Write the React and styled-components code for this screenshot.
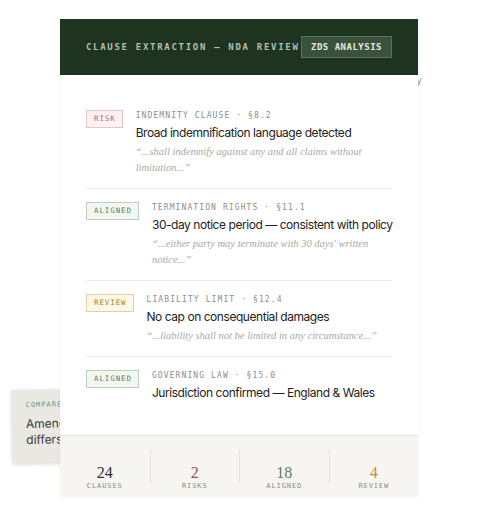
import React from "react";
import styled, { createGlobalStyle } from "styled-components";

const GlobalStyle = createGlobalStyle`
  html, body { margin: 0; padding: 0; background: #ffffff; }
  body { font-family: Inter, "Noto Sans", sans-serif; -webkit-font-smoothing: antialiased; }
  * { box-sizing: border-box; }
`;

const MONO = `"DejaVu Sans Mono", "Liberation Mono", monospace`;
const SERIF = `"Liberation Serif", "DejaVu Serif", serif`;

const Stage = styled.div`
  position: relative;
  width: 490px;
  height: 509px;
  padding: 19px 0 0 60px;
  overflow: hidden;
`;

const BackCard = styled.div`
  position: absolute;
  left: 12px;
  top: 389px;
  width: 150px;
  height: 73px;
  padding: 10px 14px;
  background: #e9e8e3;
  box-shadow: 0 1px 4px rgba(0, 0, 0, 0.16);
  transform: rotate(-1deg);
  z-index: 0;
`;

const BackLabel = styled.div`
  font: 400 7px/10px ${MONO};
  letter-spacing: 1px;
  color: #6f9a6f;
  margin-bottom: 6px;
`;

const BackText = styled.div`
  font: 400 12px/16px Inter, sans-serif;
  color: #3a3a3a;
`;

const BackNote = styled.span`
  position: absolute;
  right: 68px;
  top: 74px;
  font: 400 10px/12px Inter, sans-serif;
  color: #9c9c9c;
  z-index: 0;
`;

const Card = styled.div`
  position: relative;
  z-index: 1;
  width: 358px;
  background: #ffffff;
  box-shadow: 0 1px 3px rgba(0, 0, 0, 0.05);
`;

const Header = styled.header`
  display: flex;
  align-items: center;
  justify-content: space-between;
  height: 56px;
  padding: 0 26px;
  background: #1f3321;
`;

const HeaderTitle = styled.h1`
  margin: 0;
  font: 700 9px/1 ${MONO};
  letter-spacing: 1.7px;
  color: #b3bfac;
  white-space: nowrap;
`;

const HeaderTag = styled.span`
  font: 700 9px/12px ${MONO};
  letter-spacing: 0.5px;
  color: #e4eae0;
  background: #3a523b;
  border: 1px solid #5c735b;
  padding: 4px 9px;
  white-space: nowrap;
`;

const Body = styled.div`
  padding: 22px 26px 22px;
`;

const Item = styled.div`
  display: flex;
  align-items: flex-start;
  gap: 13px;
  padding: 13px 0 12px;
  border-bottom: 1px solid #ececea;
  &:last-child { border-bottom: none; }
`;

const badgeTones = {
  risk: { fg: "#b9646f", bg: "#fcf2f2", bd: "#e6c3c7" },
  aligned: { fg: "#5f7f5f", bg: "#f3f7f1", bd: "#bcd0bb" },
  review: { fg: "#a5842f", bg: "#fcf7e8", bd: "#e3d199" },
};

const Badge = styled.span`
  flex: none;
  font: 400 7.5px/16px ${MONO};
  letter-spacing: 0.9px;
  padding: 0 6px 0 7px;
  color: ${(p) => badgeTones[p.$tone].fg};
  background: ${(p) => badgeTones[p.$tone].bg};
  border: 1px solid ${(p) => badgeTones[p.$tone].bd};
`;

const Content = styled.div`
  flex: 1;
  min-width: 0;
`;

const Label = styled.div`
  font: 400 8px/12px ${MONO};
  letter-spacing: 1.1px;
  color: #8d8d8a;
  margin-bottom: 3px;
`;

const Title = styled.div`
  font: 400 12px/16px Inter, sans-serif;
  letter-spacing: -0.45px;
  color: #222222;
  white-space: nowrap;
`;

const Quote = styled.div`
  margin-top: 3px;
  font: italic 400 10.5px/16px ${SERIF};
  color: #a9a9a5;
`;

const Footer = styled.footer`
  display: grid;
  grid-template-columns: repeat(4, 1fr);
  padding: 14px 0 13px;
  background: #f6f5f2;
  border-top: 1px solid #e6e5e1;
`;

const Stat = styled.div`
  display: flex;
  flex-direction: column;
  align-items: center;
  padding-top: 14px;
  border-left: 1px solid #e2e1dc;
  &:first-child { border-left: none; }
`;

const StatValue = styled.div`
  font: 400 16px/18px ${SERIF};
  color: ${(p) => p.$color};
`;

const StatLabel = styled.div`
  font: 400 7px/9px ${MONO};
  letter-spacing: 0.9px;
  color: #8a8a87;
  margin-bottom: -8px;
`;

const clauses = [
  {
    tone: "risk",
    badge: "RISK",
    label: "INDEMNITY CLAUSE · §8.2",
    title: "Broad indemnification language detected",
    quote: "\u201C...shall indemnify against any and all claims without limitation...\u201D",
  },
  {
    tone: "aligned",
    badge: "ALIGNED",
    label: "TERMINATION RIGHTS · §11.1",
    title: "30-day notice period — consistent with policy",
    quote: "\u201C...either party may terminate with 30 days' written notice...\u201D",
  },
  {
    tone: "review",
    badge: "REVIEW",
    label: "LIABILITY LIMIT · §12.4",
    title: "No cap on consequential damages",
    quote: "\u201C...liability shall not be limited in any circumstance...\u201D",
  },
  {
    tone: "aligned",
    badge: "ALIGNED",
    label: "GOVERNING LAW · §15.0",
    title: "Jurisdiction confirmed — England & Wales",
  },
];

const stats = [
  { value: "24", label: "CLAUSES", color: "#2e2e2e" },
  { value: "2", label: "RISKS", color: "#a4484f" },
  { value: "18", label: "ALIGNED", color: "#5d7d5c" },
  { value: "4", label: "REVIEW", color: "#b8923a" },
];

export default function App() {
  return (
    <>
      <GlobalStyle />
      <Stage>
        <BackCard>
          <BackLabel>COMPARED TO TEMPLATE</BackLabel>
          <BackText>Amended clause</BackText>
          <BackText>differs from standard</BackText>
        </BackCard>
        <BackNote>Summary</BackNote>
        <Card>
          <Header>
            <HeaderTitle>CLAUSE EXTRACTION — NDA REVIEW</HeaderTitle>
            <HeaderTag>ZDS ANALYSIS</HeaderTag>
          </Header>
          <Body>
            {clauses.map((c) => (
              <Item key={c.label}>
                <Badge $tone={c.tone}>{c.badge}</Badge>
                <Content>
                  <Label>{c.label}</Label>
                  <Title>{c.title}</Title>
                  {c.quote && <Quote>{c.quote}</Quote>}
                </Content>
              </Item>
            ))}
          </Body>
          <Footer>
            {stats.map((s) => (
              <Stat key={s.label}>
                <StatValue $color={s.color}>{s.value}</StatValue>
                <StatLabel>{s.label}</StatLabel>
              </Stat>
            ))}
          </Footer>
        </Card>
      </Stage>
    </>
  );
}
